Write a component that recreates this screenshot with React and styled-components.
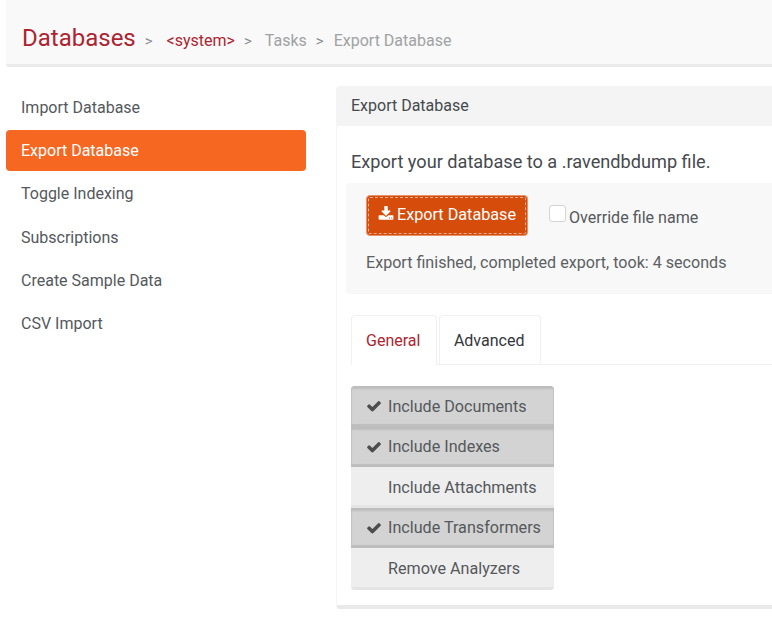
import styled, { createGlobalStyle } from "styled-components";

const GlobalStyle = createGlobalStyle`
    html, body {
        margin: 0;
        padding: 0;
        background: #ffffff;
        overflow: hidden;
    }
    body {
        font-family: Roboto, "Liberation Sans", sans-serif;
        color: #4d5055;
    }
`;

const Page = styled.div`
    width: 772px;
    height: 625px;
    padding-left: 6px;
    box-sizing: border-box;
    overflow: hidden;
`;

const Header = styled.header`
    height: 67px;
    box-sizing: border-box;
    padding: 23px 0 0 16px;
    background: #f9f9f9;
    border-bottom: 3px solid #ebebeb;
    border-radius: 0 0 0 3px;
    display: flex;
    align-items: baseline;
    white-space: nowrap;
`;

const Title = styled.h1`
    margin: 0;
    font-size: 24px;
    line-height: 30px;
    font-weight: 400;
    color: #ad2431;
`;

const Sep = styled.span`
    font-size: 15px;
    color: #8a8d91;
    margin: ${(p) => p.$margin};
`;

const Crumb = styled.span`
    font-size: 16px;
    color: ${(p) => (p.$system ? "#ad2431" : "#a0a2a5")};
`;

const Body = styled.div`
    display: flex;
    padding-top: 19px;
`;

const Sidebar = styled.nav`
    width: 300px;
    flex: none;
    margin-right: 30px;
    padding-top: 1px;
`;

const NavItem = styled.div`
    height: 41px;
    margin-bottom: 2.2px;
    padding-left: 15px;
    line-height: 41px;
    font-size: 16px;
    border-radius: 4px;
    color: ${(p) => (p.$active ? "#ffffff" : "#55585c")};
    background: ${(p) => (p.$active ? "#f66722" : "transparent")};
`;

const Panel = styled.main`
    flex: 1;
    height: 523px;
    box-sizing: border-box;
    border-left: 1px solid #f5f5f5;
    border-bottom: 4px solid #e9e9e9;
    border-radius: 4px 0 0 4px;
`;

const PanelTitle = styled.div`
    height: 40px;
    line-height: 40px;
    margin-left: -1px;
    padding-left: 15px;
    font-size: 16px;
    color: #46494d;
    background: #f4f4f4;
    border-radius: 4px 0 0 0;
`;

const Content = styled.div`
    padding: 0 0 0 14px;
`;

const Lead = styled.p`
    margin: 0;
    height: 57px;
    line-height: 71px;
    font-size: 18.15px;
    color: #46494d;
`;

const Well = styled.section`
    margin-left: -5px;
    height: 111px;
    box-sizing: border-box;
    padding: 12px 0 0 20px;
    background: #f8f8f8;
    border-radius: 4px 0 0 4px;
`;

const ActionRow = styled.div`
    display: flex;
    align-items: center;
`;

const ExportButton = styled.button`
    width: 162px;
    height: 41px;
    box-sizing: border-box;
    padding: 0 0 2px;
    border: 1px solid #e8926a;
    outline: 1px dashed rgba(255, 255, 255, 0.55);
    outline-offset: -3px;
    border-radius: 4px;
    background: #d64c0b;
    color: #ffffff;
    font: 400 16.2px Roboto, sans-serif;
    display: flex;
    align-items: center;
    justify-content: center;
    gap: 3px;
`;

const ButtonIcon = styled.svg`
    width: 16px;
    height: 16px;
    margin-top: -2px;
    fill: currentColor;
`;

const CheckLabel = styled.label`
    margin: 4px 0 0 21px;
    display: flex;
    align-items: center;
    font-size: 16.1px;
    color: #55585c;
`;

const CheckBox = styled.span`
    width: 17px;
    height: 17px;
    box-sizing: border-box;
    margin-right: 3px;
    margin-top: -9px;
    background: #ffffff;
    border: 1px solid #d4d4d4;
    border-radius: 3px;
`;

const Status = styled.p`
    margin: 0;
    padding-top: 18px;
    line-height: 18px;
    font-size: 16.1px;
    color: #5c5f63;
`;

const Tabs = styled.div`
    display: flex;
    gap: 2px;
    margin-top: 21px;
    height: 50px;
    box-sizing: border-box;
    border-bottom: 1px solid #eeeeee;
`;

const Tab = styled.div`
    height: 50px;
    box-sizing: border-box;
    padding: 0 15.5px 0 14px;
    line-height: 50px;
    font-size: 16px;
    border: 1px solid #f0f0f0;
    border-bottom: ${(p) => (p.$active ? "none" : "1px solid #eeeeee")};
    border-radius: 4px 4px 0 0;
    background: #ffffff;
    color: ${(p) => (p.$active ? "#ad2431" : "#33363a")};
`;

const ToggleGroup = styled.div`
    width: 203px;
    margin-top: 21px;
    display: flex;
    flex-direction: column;
    border-radius: 4px;
    overflow: hidden;
`;

const Toggle = styled.div`
    height: ${(p) => (p.$last ? "42px" : "40.5px")};
    box-sizing: border-box;
    display: flex;
    align-items: center;
    padding: 0 0 ${(p) => (p.$last ? "2px" : "0")} 15px;
    font-size: 16.15px;
    color: #55585c;
    background: ${(p) => (p.$on ? "#d3d3d3" : "#eeeeee")};
    box-shadow: ${(p) =>
        p.$on
            ? "inset 0 4px 2px -1px #bdbdbd, inset 0 -4px 1px -1px #bdbdbd, inset 1px 0 1px #c4c4c4, inset -1px 0 1px #c4c4c4"
            : "inset 0 -3px 0 #e4e4e4"};
`;

const Tick = styled.svg`
    width: 16px;
    height: 16px;
    flex: none;
    margin-right: 6px;
    fill: #4d4d4d;
`;

const TickSpace = styled.span`
    width: 22px;
    flex: none;
`;

const navItems = [
    "Import Database",
    "Export Database",
    "Toggle Indexing",
    "Subscriptions",
    "Create Sample Data",
    "CSV Import",
];

const toggles = [
    { label: "Include Documents", on: true },
    { label: "Include Indexes", on: true },
    { label: "Include Attachments", on: false },
    { label: "Include Transformers", on: true },
    { label: "Remove Analyzers", on: false },
];

function App() {
    return (
        <>
            <GlobalStyle />
            <Page>
                <Header>
                    <Title>Databases</Title>
                    <Sep $margin="0 14px 0 9px">&gt;</Sep>
                    <Crumb $system>&lt;system&gt;</Crumb>
                    <Sep $margin="0 13px 0 9px">&gt;</Sep>
                    <Crumb>Tasks</Crumb>
                    <Sep $margin="0 10px 0 9px">&gt;</Sep>
                    <Crumb>Export Database</Crumb>
                </Header>
                <Body>
                    <Sidebar>
                        {navItems.map((item) => (
                            <NavItem key={item} $active={item === "Export Database"}>
                                {item}
                            </NavItem>
                        ))}
                    </Sidebar>
                    <Panel>
                        <PanelTitle>Export Database</PanelTitle>
                        <Content>
                            <Lead>Export your database to a .ravendbdump file.</Lead>
                            <Well>
                                <ActionRow>
                                    <ExportButton>
                                        <ButtonIcon viewBox="0 0 1792 1792">
                                            <path d="M1344 1344q0-26-19-45t-45-19-45 19-19 45 19 45 45 19 45-19 19-45zm256 0q0-26-19-45t-45-19-45 19-19 45 19 45 45 19 45-19 19-45zm128-224v320q0 40-28 68t-68 28h-1472q-40 0-68-28t-28-68v-320q0-40 28-68t68-28h465l135 136q58 56 136 56t136-56l136-136h464q40 0 68 28t28 68zm-325-569q17 41-14 70l-448 448q-18 19-45 19t-45-19l-448-448q-31-29-14-70 17-39 59-39h256v-448q0-26 19-45t45-19h256q26 0 45 19t19 45v448h256q42 0 59 39z" />
                                        </ButtonIcon>
                                        Export Database
                                    </ExportButton>
                                    <CheckLabel>
                                        <CheckBox />
                                        Override file name
                                    </CheckLabel>
                                </ActionRow>
                                <Status>Export finished, completed export, took: 4 seconds</Status>
                            </Well>
                            <Tabs>
                                <Tab $active>General</Tab>
                                <Tab>Advanced</Tab>
                            </Tabs>
                            <ToggleGroup>
                                {toggles.map((t, i) => (
                                    <Toggle key={t.label} $on={t.on} $last={i === toggles.length - 1}>
                                        {t.on ? (
                                            <Tick viewBox="0 0 1792 1792">
                                                <path d="M1671 566q0 40-28 68l-724 724-136 136q-28 28-68 28t-68-28l-136-136-362-362q-28-28-28-68t28-68l136-136q28-28 68-28t68 28l294 295 656-657q28-28 68-28t68 28l136 136q28 28 28 68z" />
                                            </Tick>
                                        ) : (
                                            <TickSpace />
                                        )}
                                        {t.label}
                                    </Toggle>
                                ))}
                            </ToggleGroup>
                        </Content>
                    </Panel>
                </Body>
            </Page>
        </>
    );
}

export default App;
